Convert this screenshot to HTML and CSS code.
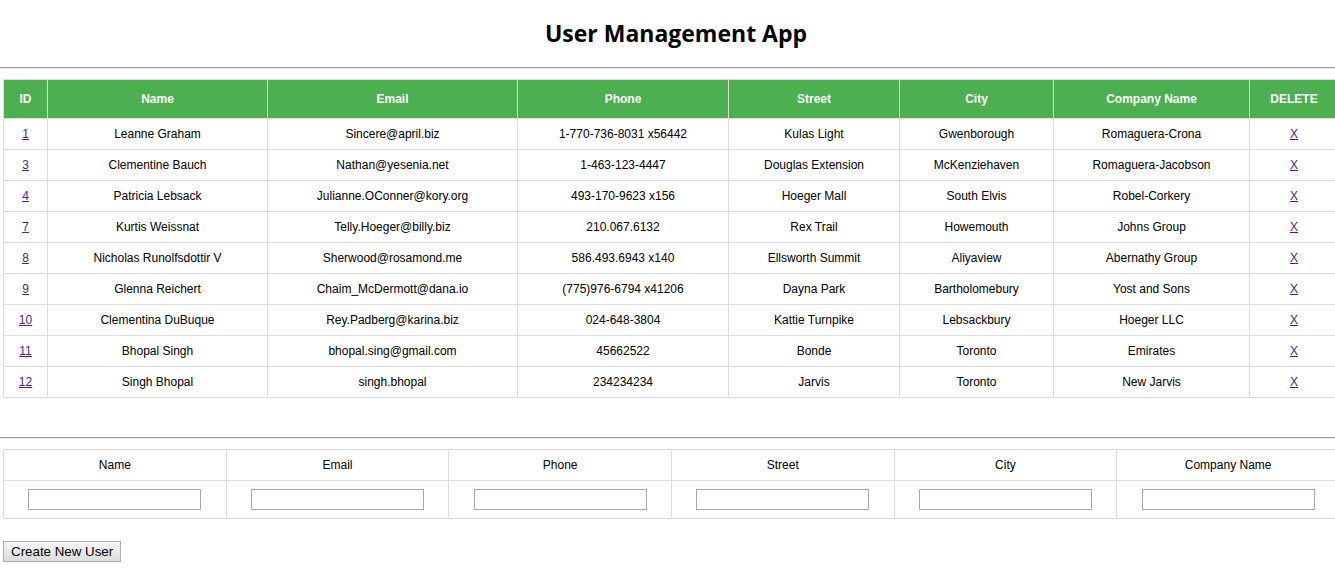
FILE: index.html
```html
<!DOCTYPE html>
<html lang="en">
<head>
<meta charset="utf-8">
<title>User Management App</title>
<link rel="stylesheet" href="styles.css">
</head>
<body>
<div class="app">
  <h1 class="title">User Management App</h1>
  <hr class="rule">
  <div class="wrap">
    <table class="users">
      <colgroup>
        <col class="c-id"><col class="c-name"><col class="c-email"><col class="c-phone"><col class="c-street"><col class="c-city"><col class="c-company"><col class="c-del">
      </colgroup>
      <thead>
        <tr><th>ID</th><th>Name</th><th>Email</th><th>Phone</th><th>Street</th><th>City</th><th>Company Name</th><th>DELETE</th></tr>
      </thead>
      <tbody>
        <tr><td><a href="#">1</a></td><td>Leanne Graham</td><td>Sincere@april.biz</td><td>1-770-736-8031 x56442</td><td>Kulas Light</td><td>Gwenborough</td><td>Romaguera-Crona</td><td><a href="#">X</a></td></tr>
        <tr><td><a href="#">3</a></td><td>Clementine Bauch</td><td>Nathan@yesenia.net</td><td>1-463-123-4447</td><td>Douglas Extension</td><td>McKenziehaven</td><td>Romaguera-Jacobson</td><td><a href="#">X</a></td></tr>
        <tr><td><a href="#">4</a></td><td>Patricia Lebsack</td><td>Julianne.OConner@kory.org</td><td>493-170-9623 x156</td><td>Hoeger Mall</td><td>South Elvis</td><td>Robel-Corkery</td><td><a href="#">X</a></td></tr>
        <tr><td><a href="#">7</a></td><td>Kurtis Weissnat</td><td>Telly.Hoeger@billy.biz</td><td>210.067.6132</td><td>Rex Trail</td><td>Howemouth</td><td>Johns Group</td><td><a href="#">X</a></td></tr>
        <tr><td><a href="#">8</a></td><td>Nicholas Runolfsdottir V</td><td>Sherwood@rosamond.me</td><td>586.493.6943 x140</td><td>Ellsworth Summit</td><td>Aliyaview</td><td>Abernathy Group</td><td><a href="#">X</a></td></tr>
        <tr><td><a href="#">9</a></td><td>Glenna Reichert</td><td>Chaim_McDermott@dana.io</td><td>(775)976-6794 x41206</td><td>Dayna Park</td><td>Bartholomebury</td><td>Yost and Sons</td><td><a href="#">X</a></td></tr>
        <tr><td><a href="#">10</a></td><td>Clementina DuBuque</td><td>Rey.Padberg@karina.biz</td><td>024-648-3804</td><td>Kattie Turnpike</td><td>Lebsackbury</td><td>Hoeger LLC</td><td><a href="#">X</a></td></tr>
        <tr><td><a href="#">11</a></td><td>Bhopal Singh</td><td>bhopal.sing@gmail.com</td><td>45662522</td><td>Bonde</td><td>Toronto</td><td>Emirates</td><td><a href="#">X</a></td></tr>
        <tr><td><a href="#">12</a></td><td>Singh Bhopal</td><td>singh.bhopal</td><td>234234234</td><td>Jarvis</td><td>Toronto</td><td>New Jarvis</td><td><a href="#">X</a></td></tr>
      </tbody>
    </table>
  </div>
  <hr class="rule rule-form">
  <div class="wrap">
    <table class="form">
      <thead>
        <tr><th>Name</th><th>Email</th><th>Phone</th><th>Street</th><th>City</th><th>Company Name</th></tr>
      </thead>
      <tbody>
        <tr>
          <td><input class="field" type="text"></td>
          <td><input class="field" type="text"></td>
          <td><input class="field" type="text"></td>
          <td><input class="field" type="text"></td>
          <td><input class="field" type="text"></td>
          <td><input class="field" type="text"></td>
        </tr>
      </tbody>
    </table>
  </div>
  <div class="actions">
    <button class="create" type="button">Create New User</button>
  </div>
</div>
</body>
</html>
```

FILE: styles.css
```css
html, body {
  margin: 0;
  padding: 0;
  background: #fff;
}

body {
  font-family: "Liberation Sans", Arial, sans-serif;
  color: #000;
  overflow-x: hidden;
}

.title {
  margin: 0;
  padding: 19px 0 20px 17px;
  font-size: 23px;
  line-height: 28px;
  font-weight: bold;
  text-align: center;
  font-family: "Open Sans", "Liberation Sans", sans-serif;
}

.rule {
  margin: 0;
  height: 0;
  border: 0;
  border-top: 1px solid #9a9a9a;
  border-bottom: 1px solid #eeeeee;
}

.rule-form {
  margin-top: 39px;
}

.wrap {
  overflow: hidden;
  margin-top: 10px;
}

.users, .form {
  border-collapse: collapse;
  width: 100%;
  margin-left: 3px;
  table-layout: fixed;
  font-size: 12px;
}

.form {
  width: calc(100% + 2px);
}

.users th, .users td, .form th, .form td {
  border: 1px solid #dddddd;
  text-align: center;
  white-space: nowrap;
}

.users th {
  background: #4caf50;
  color: #fff;
  font-weight: bold;
  line-height: 14px;
  padding: 12px 4px;
}

.users td {
  line-height: 14px;
  padding: 8px 4px;
}

.c-id { width: 44px; }
.c-name { width: 220px; }
.c-email { width: 250px; }
.c-phone { width: 211px; }
.c-street { width: 171px; }
.c-city { width: 154px; }
.c-company { width: 196px; }
.c-del { width: 89px; }

.users a {
  color: #551a8b;
  text-decoration: underline;
}

.form th {
  font-weight: normal;
  line-height: 14px;
  padding: 8px 4px;
}

.form td {
  padding: 8px 4px;
  line-height: 0;
}

.field {
  width: 173px;
  height: 21px;
  box-sizing: border-box;
  border: 1px solid #a9a9a9;
  margin: 0;
  padding: 1px 2px;
  vertical-align: middle;
  font-size: 13px;
  background: #fff;
}

.actions {
  padding: 22px 0 0 3px;
}

.create {
  font-family: "Liberation Sans", Arial, sans-serif;
  font-size: 13.33px;
  color: #000;
  height: 21px;
  padding: 1px 7px;
  margin: 0;
  border: 1px solid #adadad;
  border-radius: 0;
  background: linear-gradient(#f6f6f6, #dcdcdc);
}
```
